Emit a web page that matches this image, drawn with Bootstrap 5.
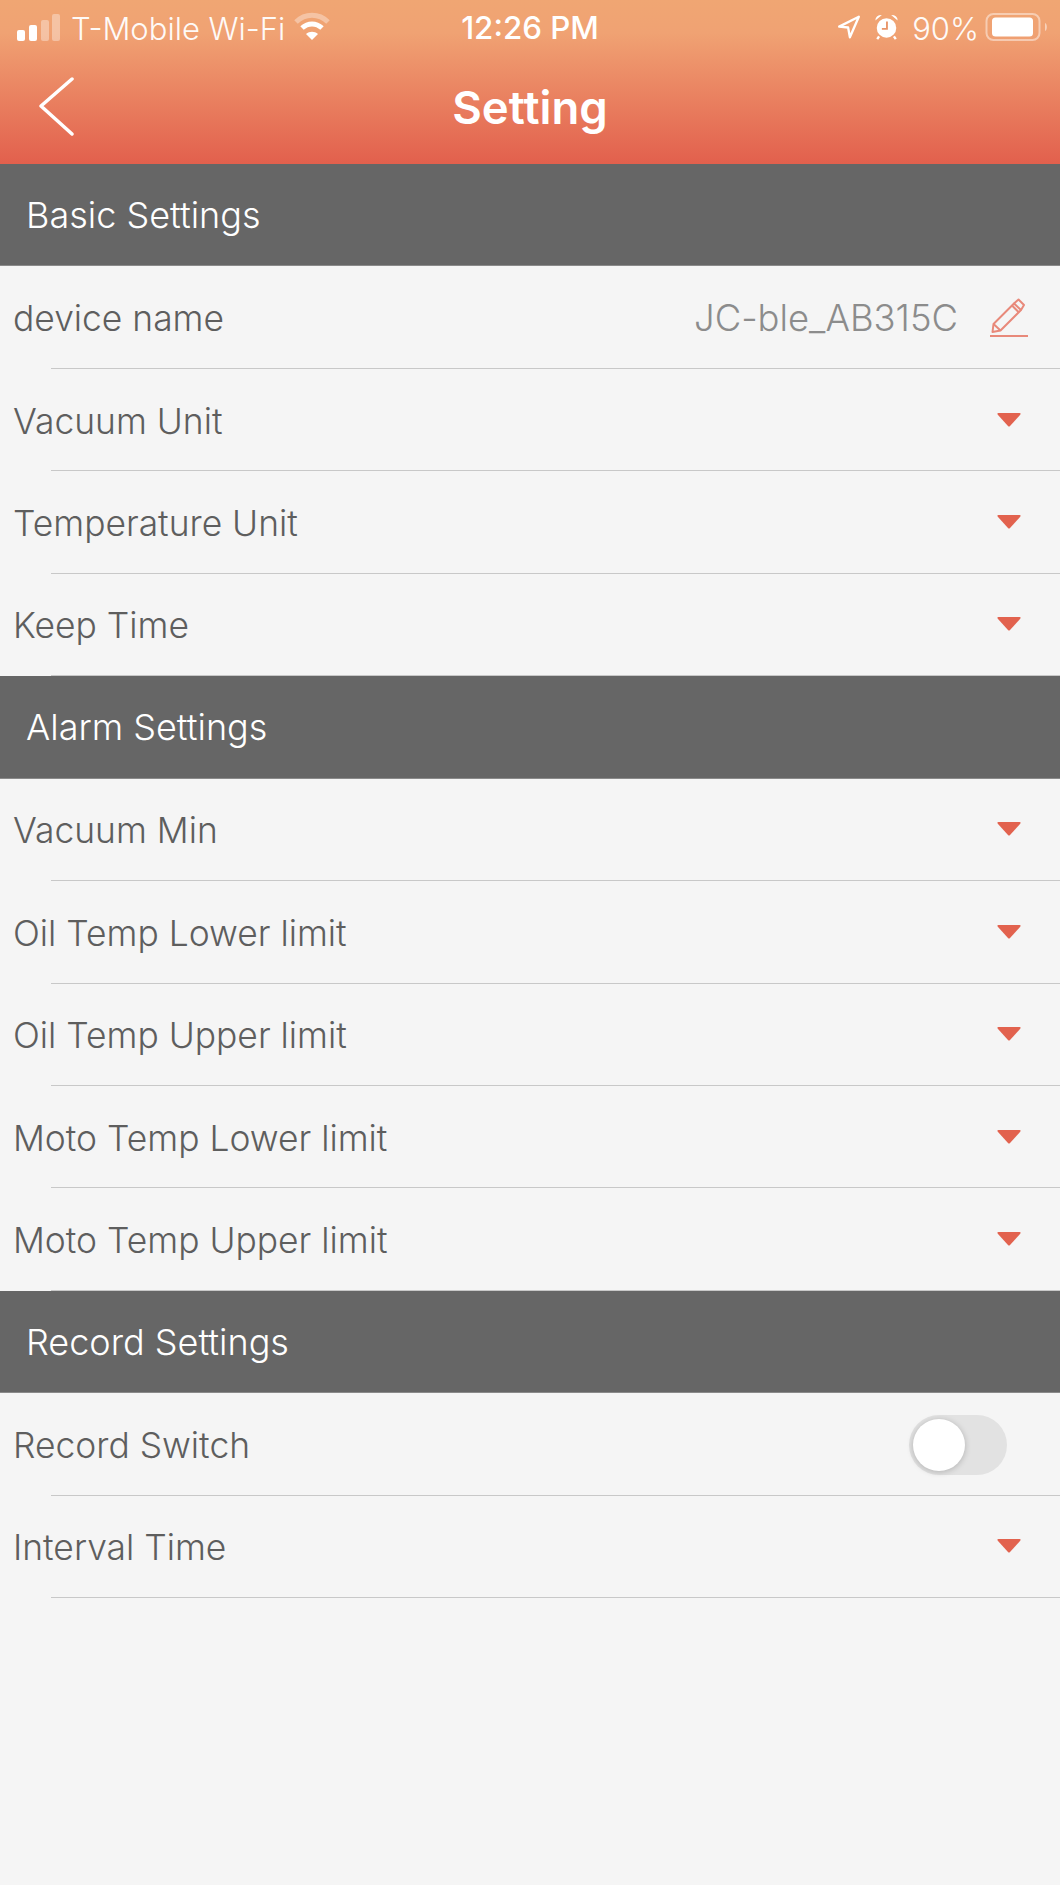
<!DOCTYPE html>
<html lang="en">
<head>
    <meta charset="UTF-8">
    <meta name="viewport" content="width=device-width, initial-scale=1.0">
    <title>Setting</title>

    <link href="https://cdn.jsdelivr.net/npm/bootstrap@5.3.0/dist/css/bootstrap.min.css" rel="stylesheet">

    <style>
        html, body {
            height: 100%;
        }
        body {
            font-family: Inter, "Liberation Sans", sans-serif;
            background: #f5f5f5;
            color: #666;
            overflow: hidden;
        }
        .app-top {
            height: 164px;
            background: linear-gradient(180deg, #f0a673 0%, #f0a273 20%, #e97f5f 62%, #e2604d 100%);
            color: #fff;
        }
        .status-line {
            height: 56px;
            padding: 2px 11px 0 17px;
        }
        .status-line svg {
            margin-top: -4px;
        }
        .status-time { font-size: 31.300px; font-weight: 500; }
        .carrier { font-size: 31px; font-weight: 300; opacity: .95; margin-left: 11px; }
        .pct { font-size: 31px; font-weight: 300; opacity: .95; }
        .status-right { gap: 13px; }
        .battery-icon { margin-left: -7px; }
        .title-line {
            height: 108px;
            padding-bottom: 4px;
        }
        .title-line h1 {
            font-size: 45.500px;
            font-weight: 600;
            margin: 0;
        }
        .back-icon {
            left: 39px;
            top: 21px;
        }
        .group-bar {
            height: 102.450px;
            background: #666;
            color: #fff;
            font-size: 36px;
            font-weight: 300;
            padding-left: 26px;
            border-bottom: 1px solid #8a8a8a;
        }
        .set-row {
            height: 102.450px;
            font-size: 35.400px;
            font-weight: 300;
            padding: 2px 0 0 13px;
            color: #5e5e5e;
        }
        .set-row::after {
            content: "";
            position: absolute;
            left: 51px;
            right: 0;
            bottom: 0;
            height: 1px;
            background: #c8c8c8;
        }
        .caret-down {
            margin-right: 39px;
            margin-top: -3px;
        }
        .dev-value {
            color: #8c8c8c;
            font-size: 36.400px;
            font-weight: 300;
            margin-right: 32px;
        }
        .edit-icon {
            margin-right: 32px;
            margin-top: -4px;
        }
        .fake-switch {
            width: 98px;
            height: 60px;
            margin-right: 53px;
            border-radius: 30px;
            background: #e2e2e2;
        }
        .fake-switch::before {
            content: "";
            position: absolute;
            left: 4px;
            top: 4px;
            width: 52px;
            height: 52px;
            border-radius: 50%;
            background: #fff;
            box-shadow: 0 1px 6px rgba(0, 0, 0, .22);
        }
    </style>
</head>
<body>

<!-- Orange header with status bar -->
<header class="app-top">
    <div class="status-line d-flex align-items-center position-relative">
        <svg width="43" height="27" viewBox="0 0 43 27" class="flex-shrink-0" fill="#fff">
            <rect x="0" y="16" width="8" height="11" rx="2"/>
            <rect x="12" y="11" width="8" height="16" rx="2"/>
            <rect x="24" y="6" width="8" height="21" rx="2" opacity=".35"/>
            <rect x="35" y="0" width="8" height="27" rx="2" opacity=".35"/>
        </svg>
        <span class="carrier">T-Mobile Wi-Fi</span>
        <svg width="38" height="30" viewBox="0 0 38 30" class="ms-2" fill="none" stroke="#fff" stroke-width="5">
            <path d="M3 10 C12 1 26 1 35 10" opacity=".35"/>
            <path d="M9 16 C15 10.500 23 10.500 29 16"/>
            <path d="M19 28 L13 22 C16.500 19 21.500 19 25 22 Z" fill="#fff" stroke="none"/>
        </svg>
        <span class="status-time position-absolute top-50 start-50 translate-middle">12:26 PM</span>
        <div class="status-right ms-auto d-flex align-items-center">
            <svg width="24" height="25" viewBox="0 0 26 28" fill="none" stroke="#fff" stroke-width="2.600" stroke-linejoin="round">
                <path d="M2 13 L24 2 L14 25 L12 14 Z"/>
            </svg>
            <svg width="25" height="26" viewBox="0 0 26 28" fill="#fff">
                <circle cx="13" cy="15" r="10.500"/>
                <path d="M1 7 Q1 1 8 1 Z M25 7 Q25 1 18 1 Z"/>
                <path d="M5 24 L3 27 M21 24 L23 27" stroke="#fff" stroke-width="2.500"/>
                <path d="M13.500 8 V16 H8" fill="none" stroke="#e99468" stroke-width="2"/>
            </svg>
            <span class="pct">90%</span>
            <svg class="battery-icon flex-shrink-0" width="64" height="30" viewBox="0 0 64 30">
                <rect x="1.500" y="2" width="53" height="26" rx="7" fill="none" stroke="#fff" stroke-width="2" opacity=".45"/>
                <rect x="7" y="5.500" width="41" height="19" rx="3.500" fill="#fff"/>
                <path d="M60 11 C62.500 12 62.500 18 60 19 Z" fill="#fff" opacity=".5"/>
            </svg>
        </div>
    </div>
    <div class="title-line d-flex align-items-center justify-content-center position-relative">
        <svg class="back-icon position-absolute" width="36" height="60" viewBox="0 0 36 60" fill="none" stroke="#fff" stroke-width="3.500" stroke-linecap="round" stroke-linejoin="round">
            <path d="M33 2 L2 29 L33 57"/>
        </svg>
        <h1>Setting</h1>
    </div>
</header>

<main>
    <div class="group-bar d-flex align-items-center">Basic Settings</div>
    <div class="set-row d-flex align-items-center justify-content-between position-relative">
        <span>device name</span>
        <div class="d-flex align-items-center">
            <span class="dev-value">JC-ble_AB315C</span>
            <!-- pencil with baseline -->
            <svg class="edit-icon" width="38" height="40" viewBox="0 0 38 40" fill="none" stroke="#e8897a" stroke-width="2" stroke-linejoin="round">
                <path d="M0 39 H38"/>
                <path d="M2.500 35 L3.500 27 L24 6.500 L31 13 L10.500 33.500 Z"/>
                <path d="M3.500 27 L10.500 33.500 M24 6.500 L28.500 2.500 L34 8 L31 13 M22 8.500 L29 15.500"/>
            </svg>
        </div>
    </div>
    <div class="set-row d-flex align-items-center justify-content-between position-relative">
        <span>Vacuum Unit</span>
        <svg class="caret-down" width="24" height="14" viewBox="0 0 24 14"><path d="M1.500 0 H22.500 Q24.500 0 23 2 L13 13 Q12 14 11 13 L1 2 Q-.5 0 1.500 0 Z" fill="#e2624e"/></svg>
    </div>
    <div class="set-row d-flex align-items-center justify-content-between position-relative">
        <span>Temperature Unit</span>
        <svg class="caret-down" width="24" height="14" viewBox="0 0 24 14"><path d="M1.500 0 H22.500 Q24.500 0 23 2 L13 13 Q12 14 11 13 L1 2 Q-.5 0 1.500 0 Z" fill="#e2624e"/></svg>
    </div>
    <div class="set-row d-flex align-items-center justify-content-between position-relative">
        <span>Keep Time</span>
        <svg class="caret-down" width="24" height="14" viewBox="0 0 24 14"><path d="M1.500 0 H22.500 Q24.500 0 23 2 L13 13 Q12 14 11 13 L1 2 Q-.5 0 1.500 0 Z" fill="#e2624e"/></svg>
    </div>

    <div class="group-bar d-flex align-items-center">Alarm Settings</div>
    <div class="set-row d-flex align-items-center justify-content-between position-relative">
        <span>Vacuum Min</span>
        <svg class="caret-down" width="24" height="14" viewBox="0 0 24 14"><path d="M1.500 0 H22.500 Q24.500 0 23 2 L13 13 Q12 14 11 13 L1 2 Q-.5 0 1.500 0 Z" fill="#e2624e"/></svg>
    </div>
    <div class="set-row d-flex align-items-center justify-content-between position-relative">
        <span>Oil Temp Lower limit</span>
        <svg class="caret-down" width="24" height="14" viewBox="0 0 24 14"><path d="M1.500 0 H22.500 Q24.500 0 23 2 L13 13 Q12 14 11 13 L1 2 Q-.5 0 1.500 0 Z" fill="#e2624e"/></svg>
    </div>
    <div class="set-row d-flex align-items-center justify-content-between position-relative">
        <span>Oil Temp Upper limit</span>
        <svg class="caret-down" width="24" height="14" viewBox="0 0 24 14"><path d="M1.500 0 H22.500 Q24.500 0 23 2 L13 13 Q12 14 11 13 L1 2 Q-.5 0 1.500 0 Z" fill="#e2624e"/></svg>
    </div>
    <div class="set-row d-flex align-items-center justify-content-between position-relative">
        <span>Moto Temp Lower limit</span>
        <svg class="caret-down" width="24" height="14" viewBox="0 0 24 14"><path d="M1.500 0 H22.500 Q24.500 0 23 2 L13 13 Q12 14 11 13 L1 2 Q-.5 0 1.500 0 Z" fill="#e2624e"/></svg>
    </div>
    <div class="set-row d-flex align-items-center justify-content-between position-relative">
        <span>Moto Temp Upper limit</span>
        <svg class="caret-down" width="24" height="14" viewBox="0 0 24 14"><path d="M1.500 0 H22.500 Q24.500 0 23 2 L13 13 Q12 14 11 13 L1 2 Q-.5 0 1.500 0 Z" fill="#e2624e"/></svg>
    </div>

    <div class="group-bar d-flex align-items-center">Record Settings</div>
    <div class="set-row d-flex align-items-center justify-content-between position-relative">
        <span>Record Switch</span>
        <div class="fake-switch position-relative"></div>
    </div>
    <div class="set-row d-flex align-items-center justify-content-between position-relative">
        <span>Interval Time</span>
        <svg class="caret-down" width="24" height="14" viewBox="0 0 24 14"><path d="M1.500 0 H22.500 Q24.500 0 23 2 L13 13 Q12 14 11 13 L1 2 Q-.5 0 1.500 0 Z" fill="#e2624e"/></svg>
    </div>
</main>

<script src="https://cdn.jsdelivr.net/npm/bootstrap@5.3.0/dist/js/bootstrap.bundle.min.js"></script>
</body>
</html>
